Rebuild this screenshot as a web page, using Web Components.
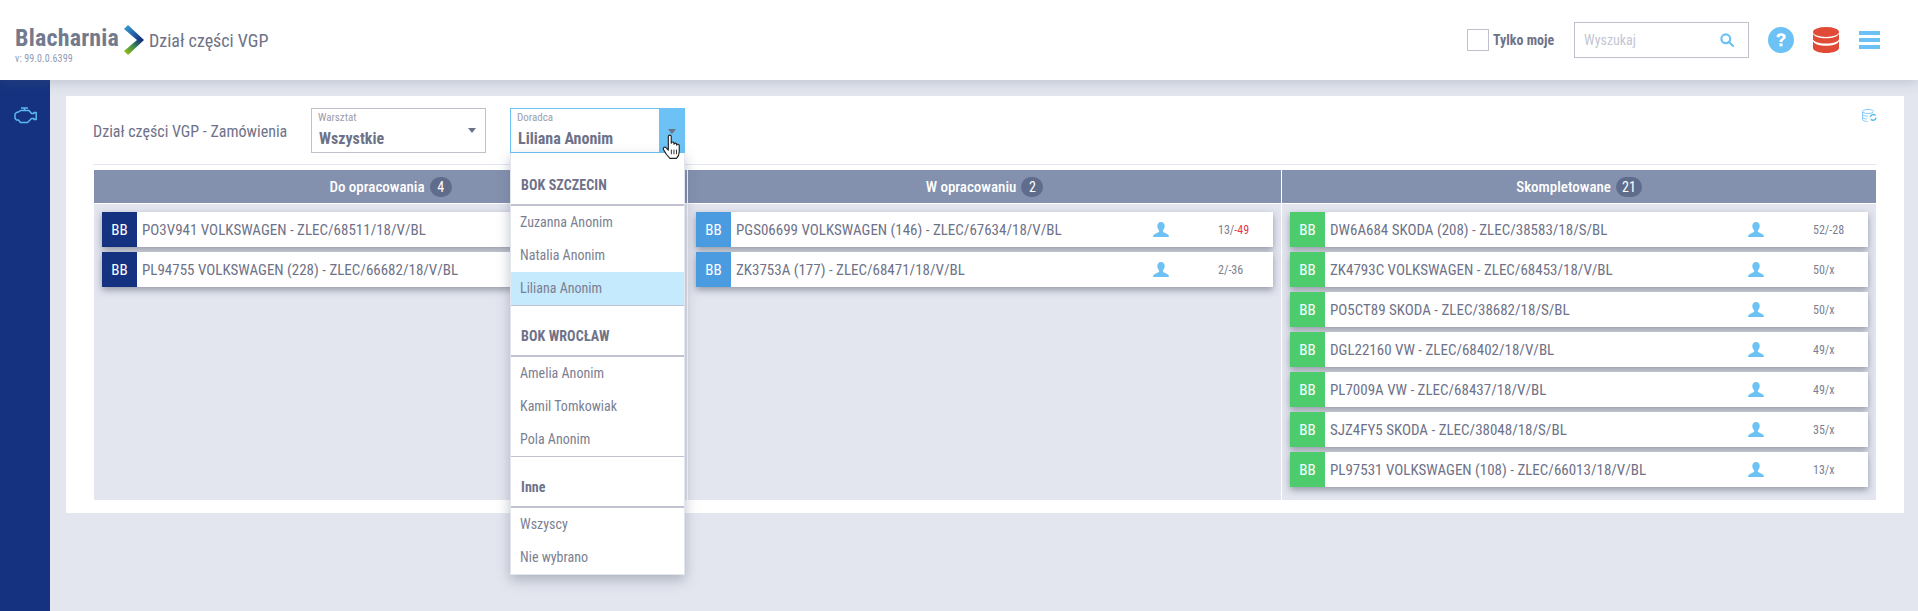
<!DOCTYPE html>
<html lang="pl"><head><meta charset="utf-8"><title>Dział części VGP</title>
<style>
html,body{margin:0;height:611px;overflow:hidden;background:#e3e6ef;font-family:"Roboto Condensed",Roboto,"Liberation Sans",sans-serif;font-stretch:75%;color:#6e7288}
</style></head><body>
<app-shell>
  <app-header slot="header"></app-header>
  <side-nav slot="nav"></side-nav>
  <main-panel>
    <filter-bar>
      <span slot="title">Dział części VGP - Zamówienia</span>
      <filter-select label="Warsztat" value="Wszystkie"></filter-select>
      <filter-select label="Doradca" value="Liliana Anonim" open>
        <drop-menu></drop-menu>
      </filter-select>
    </filter-bar>
    <kan-board>
      <kan-column name="Do opracowania" count="4">
        <order-card tone="navy" text="PO3V941 VOLKSWAGEN - ZLEC/68511/18/V/BL"></order-card>
        <order-card tone="navy" text="PL94755 VOLKSWAGEN (228) - ZLEC/66682/18/V/BL"></order-card>
      </kan-column>
      <kan-column name="W opracowaniu" count="2">
        <order-card tone="blue" text="PGS06699 VOLKSWAGEN (146) - ZLEC/67634/18/V/BL" num="13/" late="-49"></order-card>
        <order-card tone="blue" text="ZK3753A (177) - ZLEC/68471/18/V/BL" num="2/-36"></order-card>
      </kan-column>
      <kan-column name="Skompletowane" count="21">
        <order-card tone="green" text="DW6A684 SKODA (208) - ZLEC/38583/18/S/BL" num="52/-28"></order-card>
        <order-card tone="green" text="ZK4793C VOLKSWAGEN - ZLEC/68453/18/V/BL" num="50/x"></order-card>
        <order-card tone="green" text="PO5CT89 SKODA - ZLEC/38682/18/S/BL" num="50/x"></order-card>
        <order-card tone="green" text="DGL22160 VW - ZLEC/68402/18/V/BL" num="49/x"></order-card>
        <order-card tone="green" text="PL7009A VW - ZLEC/68437/18/V/BL" num="49/x"></order-card>
        <order-card tone="green" text="SJZ4FY5 SKODA - ZLEC/38048/18/S/BL" num="35/x"></order-card>
        <order-card tone="green" text="PL97531 VOLKSWAGEN (108) - ZLEC/66013/18/V/BL" num="13/x"></order-card>
      </kan-column>
    </kan-board>
  </main-panel>
</app-shell>
<script>
function def(name, html){
  customElements.define(name, class extends HTMLElement{
    connectedCallback(){
      if(this.shadowRoot) return;
      const r=this.attachShadow({mode:'open'});
      r.innerHTML = typeof html==='function'? html(this):html;
    }
  });
}
def('app-shell',`<style>
:host{display:grid;grid-template-columns:50px 1fr;grid-template-rows:80px 531px;width:1918px;height:611px}
.h{grid-column:1/3;position:relative;z-index:2}
</style><div class="h"><slot name="header"></slot></div><slot name="nav"></slot><slot></slot>`);

def('app-header',`<style>
:host{display:flex;align-items:center;height:80px;background:#fff;box-shadow:0 2px 12px rgba(90,100,120,.28);box-sizing:border-box;padding:0 38px 0 15px}
.brand{display:flex;flex-direction:column;width:109px;height:46px;justify-content:flex-start;padding-top:7px;box-sizing:border-box}
b{font-size:24px;line-height:28px;letter-spacing:.2px;color:#737a8e;font-weight:700}
small{font-size:10px;line-height:13px;color:#8f9bb5;letter-spacing:.1px}
svg{display:block}
.sub{font-size:18px;color:#6e7288;margin-left:5px;flex:1}
.cb{width:20px;height:20px;border:1px solid #bfc1cd;margin-right:4px}
.only{font-size:14px;font-weight:700;color:#6e7288;width:81px}
.search{width:175px;height:36px;border:1px solid #bfc1cd;box-sizing:border-box;display:flex;align-items:center;justify-content:space-between;padding:0 14px 0 9px;color:#c3c7d3;font-size:14px;margin-right:19px}
</style>
<div class="brand"><b>Blacharnia</b><small>v: 99.0.0.6399</small></div>
<svg width="20" height="30" viewBox="0 0 20 30"><defs>
<linearGradient id="a" x1="0" y1="0" x2="1" y2=".8"><stop offset="0" stop-color="#3aa5e0"/><stop offset="1" stop-color="#14327f"/></linearGradient>
<linearGradient id="c" x1="0" y1="1" x2="1" y2=".2"><stop offset="0" stop-color="#a8cc00"/><stop offset=".55" stop-color="#3f8f50"/><stop offset="1" stop-color="#14327f"/></linearGradient></defs>
<path d="M0 4 4 0 20 15 13 15Z" fill="url(#a)"/><path d="M0 26 4 30 20 15 13 15Z" fill="url(#c)"/></svg>
<span class="sub">Dział części VGP</span>
<div class="cb"></div><span class="only">Tylko moje</span>
<div class="search"><span>Wyszukaj</span><svg width="14" height="14" viewBox="0 0 14 14" fill="none" stroke="#6cc2f5" stroke-width="2.2"><circle cx="5.8" cy="5.8" r="4.4"/><path d="M9 9l4 4" stroke-linecap="round"/></svg></div>
<svg width="26" height="26" viewBox="0 0 26 26" style="margin-right:19px"><circle cx="13" cy="13" r="13" fill="#6cc2f5"/><path d="M8.500 10c0-2.600 2-3.800 4.700-3.800 2.800 0 4.600 1.400 4.600 3.500 0 2.800-3.300 2.800-3.300 5.300h-3c0-3.400 3.200-3.500 3.200-5.100 0-.7-.6-1.100-1.500-1.100-1 0-1.600.6-1.700 1.600z" fill="#fff"/><rect x="11.500" y="16.300" width="3" height="3" fill="#fff"/></svg>
<svg width="26" height="26" viewBox="0 0 26 26" style="margin-right:20px" fill="#e04a36"><ellipse cx="13" cy="5" rx="13" ry="5"/><path d="M0 7c2 3 7 4.200 13 4.200S24 10 26 7v5c0 2.600-5.800 4.500-13 4.500S0 14.600 0 12z"/><path d="M0 14.500c2 3 7 4.200 13 4.200s11-1.200 13-4.200V21c0 2.800-5.800 5-13 5S0 23.800 0 21z"/></svg>
<svg width="21" height="18" viewBox="0 0 21 18" fill="#6cc2f5"><rect width="21" height="4"/><rect y="7" width="21" height="4"/><rect y="14" width="21" height="4"/></svg>`);

def('side-nav',`<style>:host{display:flex;justify-content:center;align-items:flex-start;background:#14327f;padding-top:27px;box-sizing:border-box}</style>
<svg width="23" height="17" viewBox="0 0 23 17" fill="none" stroke="#5cb8f0" stroke-width="1.500" stroke-linejoin="round"><path d="M7 1h7M10.500 1v2.500M4.500 5 6.500 3.500h8.500L17.500 6.500H20V5.500h2.200V12.500H20V11.500H17.500L13.500 15.500H6.500L4.500 13H2.500L1 11.500V7L2.500 5.500z"/></svg>`);

def('main-panel',`<style>:host{display:block;background:#fff;margin:16px 14px 0 16px;height:417px;padding:0 28px;box-sizing:border-box;position:relative}
svg{position:absolute;right:27px;top:13px}</style>
<slot></slot>
<svg width="15" height="13" viewBox="0 0 15 13" fill="none" stroke="#86cdf7" stroke-width="1"><ellipse cx="6" cy="2.500" rx="5.500" ry="2"/><path d="M.5 2.500v8c0 1.100 2.500 2 5 2M.5 5.200c0 1.100 2.500 2 5.500 2M.5 8c0 1.100 2.500 2 4.500 2"/><path stroke="#5cb8f0" stroke-width="1.400" d="M8.300 8a3 3 0 0 1 5.200-1.500M14 8.500a3 3 0 0 1-5.200 1.800"/></svg>`);

def('filter-bar',`<style>:host{display:flex;align-items:flex-start;height:69px;border-bottom:1px solid #e3e6ef;box-sizing:border-box;padding-top:12px;margin-left:-1px}
.t{width:218px;font-size:16px;line-height:20px;padding:14px 0 0;box-sizing:border-box;color:#6e7288}
.g{display:flex;gap:24px}</style>
<div class="t"><slot name="title"></slot></div><div class="g"><slot></slot></div>`);

def('filter-select',h=>{const open=h.hasAttribute('open');return `<style>
:host{display:block;width:175px;height:45px;position:relative;z-index:3}
.box{height:45px;box-sizing:border-box;border:1px solid ${open?'#6cc2f5':'#bfc1cd'};display:flex;position:relative;background:#fff}
.txt{flex:1;padding:2px 6px}
.l{font-size:11px;line-height:14px;color:#9a9dac}
.v{font-size:16px;line-height:20px;font-weight:700;color:#6e7288;margin-top:4px;padding-left:1px}
.btn{width:26px;background:${open?'#6cc2f5':'transparent'};display:flex;justify-content:center;padding-top:${open?21:19}px;box-sizing:border-box;margin:${open?'-1px -1px -1px 0':'0'}}
.btn i{display:block;width:0;height:0;border:4.500px solid transparent;border-top:5px solid #6e7288;border-bottom:0}
svg{position:absolute;left:152px;top:26px}
</style><div class="box"><div class="txt"><div class="l">${h.getAttribute('label')}</div><div class="v">${h.getAttribute('value')}</div></div><div class="btn"><i></i></div></div><slot></slot>
${open?`<svg style="z-index:5" width="21" height="26" viewBox="0 0 20 25"><path d="M6 2.500c0-1.800 2.800-1.800 2.800 0v6.300c0-1.500 2.600-1.500 2.600 0v1c0-1.400 2.600-1.400 2.600 0v1c0-1.300 2.500-1.300 2.500.2v6c0 3-1.700 5.500-2.700 6.500H7.500C6 22 2 16.500 1.300 15c-.8-1.800 1-3.200 2.400-1.900L6 15.500z" fill="#fff" stroke="#222" stroke-width="1.100" stroke-linejoin="round"/><path d="M8.900 15v4.500M11.400 15v4.500M13.900 15v4.500" stroke="#222" stroke-width=".9"/></svg>`:''}`});

def('drop-menu',`<style>
:host{display:block;position:absolute;left:0;top:45px;width:175px;height:422px;background:#fff;box-sizing:border-box;border:1px solid #e3e6ef;border-top:0;box-shadow:0 5px 12px rgba(90,100,120,.4);z-index:4}
.g{display:flex;align-items:flex-end;padding:0 0 9px 10px;box-sizing:border-box;font-size:14px;line-height:20px;font-weight:700;color:#6e7288;border-bottom:2px solid #c0c2cf;letter-spacing:.1px}
.i{height:33px;line-height:33px;padding-left:9px;font-size:14px;color:#7b7f92}
.sel{background:#c5e9fd}
.e{border-bottom:1px solid #c0c2cf}
</style>
<div class="g" style="height:53px">BOK SZCZECIN</div>
<div class="i">Zuzanna Anonim</div><div class="i">Natalia Anonim</div><div class="i sel">Liliana Anonim</div>
<div class="e"></div>
<div class="g" style="height:51px">BOK WROCŁAW</div>
<div class="i">Amelia Anonim</div><div class="i">Kamil Tomkowiak</div><div class="i">Pola Anonim</div>
<div class="e"></div>
<div class="g" style="height:51px">Inne</div>
<div class="i">Wszyscy</div><div class="i">Nie wybrano</div>`);

def('kan-board',`<style>:host{display:grid;grid-template-columns:594px 594px 594px;height:330px;margin-top:5px;background:#e3e6ef}</style><slot></slot>`);

def('kan-column',h=>`<style>
:host{display:block;box-sizing:border-box;border-right:1px solid #fff;height:330px}
:host(:last-child){border-right:0}
.head{height:33px;background:#8391ae;border-bottom:1px solid #fff;display:flex;align-items:center;justify-content:center;gap:5px;color:#fff;font-size:15px;font-weight:500}
.n{min-width:22px;height:20px;padding:0 ${h.getAttribute('count').length>1?'6px':'0'};box-sizing:border-box;border-radius:10px;background:#5f6c8c;text-align:center;line-height:21px;font-size:14px;font-weight:400;color:#fff}
.list{display:flex;flex-direction:column;gap:5px;padding:8px 8px 0}
</style><div class="head"><span>${h.getAttribute('name')}</span><span class="n">${h.getAttribute('count')}</span></div><div class="list"><slot></slot></div>`);

const tones={navy:'#14327f',blue:'#4a9be0',green:'#4dcc6e'};
def('order-card',h=>{const num=h.getAttribute('num');const late=h.getAttribute('late');return `<style>
:host{display:flex;height:35px;background:#fff;box-shadow:0 3px 7px rgba(70,75,95,.5);align-items:center;font-size:15px;color:#6e7288;position:relative}
.b{width:35px;height:35px;background:${tones[h.getAttribute('tone')]};color:#fff;display:flex;align-items:center;justify-content:center}
.t{flex:1;padding-left:5px;white-space:nowrap}
.u{display:block;margin-right:49px}
.n{width:55px;font-size:12px;color:#7b7f92}
.r{color:#e8384f}
</style><div class="b">BB</div><div class="t">${h.getAttribute('text')}</div>
${num?`<svg class="u" width="16" height="15" viewBox="0 0 16 15" fill="#6cc2f5"><path d="M8 0c2.300 0 3.700 1.800 3.700 4 0 1.700-.8 3.300-1.800 4.200v1.300c0 .6 1.200 1.100 2.600 1.700 1.600.6 3.500 1.400 3.500 3.800H0c0-2.400 1.900-3.200 3.500-3.800 1.400-.6 2.600-1.100 2.600-1.700V8.200C5.100 7.300 4.300 5.700 4.300 4 4.300 1.800 5.700 0 8 0z"/></svg><div class="n">${num}${late?`<span class="r">${late}</span>`:''}</div>`:''}`});
</script>
</body></html>
